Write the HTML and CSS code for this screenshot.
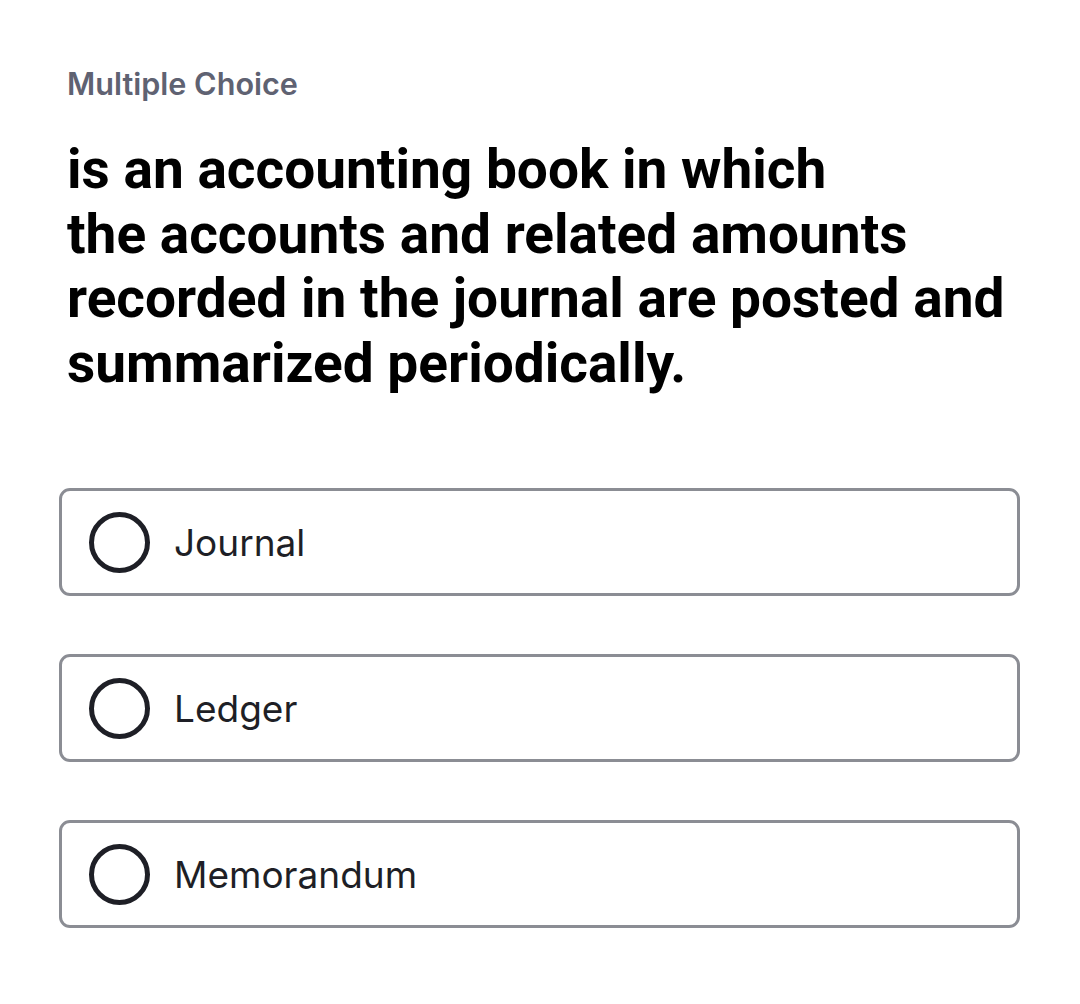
FILE: index.html
```html
<!DOCTYPE html>
<html>
<head>
<meta charset="utf-8">
<link rel="stylesheet" href="styles.css">
</head>
<body>
<div class="page">
  <div class="label">Multiple Choice</div>
  <h1 class="question">is an accounting book in which<br>the accounts and related amounts recorded in the journal are posted and summarized periodically.</h1>
  <div class="options">
    <div class="option"><span class="radio"></span><span class="text">Journal</span></div>
    <div class="option"><span class="radio"></span><span class="text">Ledger</span></div>
    <div class="option"><span class="radio"></span><span class="text">Memorandum</span></div>
  </div>
</div>
</body>
</html>
```
FILE: styles.css
```css
html, body { margin: 0; padding: 0; background: #fff; }
.page { padding: 66px 60px 0 59px; width: 961px; }
.label {
  font-family: Inter, "Noto Sans", sans-serif;
  font-weight: 600;
  font-size: 30.6px;
  line-height: 36px;
  color: #5f6272;
  padding-left: 8px;
}
.question {
  margin: 35px 0 0 0;
  padding-left: 8px;
  font-family: Roboto, sans-serif;
  font-weight: 700;
  font-size: 55px;
  line-height: 64.5px;
  color: #000;
}
.options { margin-top: 93px; display: flex; flex-direction: column; gap: 58px; }
.option {
  box-sizing: border-box;
  height: 108px;
  border: 3px solid #8b8d94;
  border-radius: 11px;
  display: flex;
  align-items: center;
  padding-left: 27px;
}
.radio {
  width: 51px; height: 51px;
  border: 5px solid #1e1f26;
  border-radius: 50%;
  flex: none;
}
.text {
  margin-left: 24px;
  font-family: Inter, "Noto Sans", sans-serif;
  font-size: 37px;
  color: #1e1f26;
}
```
